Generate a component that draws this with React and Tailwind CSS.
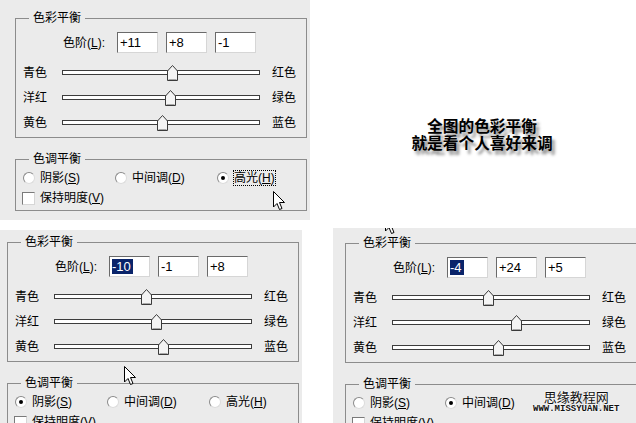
import React from "react";

const FONT = { fontFamily: '"Liberation Sans", "Noto Sans CJK SC", sans-serif' };

function Thumb({ x }) {
  return (
    <svg
      className="absolute top-[-6px]"
      style={{ left: x - 5.5 }}
      width="12"
      height="17"
      viewBox="0 0 12 17"
    >
      <polygon
        points="0.5,6 5.5,0.5 10.5,6 10.5,15.5 0.5,15.5"
        fill="#f4f4f4"
        stroke="#3a3a3a"
        strokeWidth="1"
      />
      <line x1="1.5" y1="14.5" x2="9.5" y2="14.5" stroke="#a8a8a8" />
    </svg>
  );
}

function SliderRow({ left, right, thumb }) {
  return (
    <div className="flex items-center h-[25px] pl-[7px]">
      <div className="w-[39px]">{left}</div>
      <div className="relative w-[198px] h-[5px] border border-[#3c3c3c] bg-white">
        <Thumb x={thumb} />
      </div>
      <div className="ml-[12px]">{right}</div>
    </div>
  );
}

function Field({ value, highlight }) {
  return (
    <div
      className="w-[41px] h-[21px] bg-white border border-t-[#6a6a6a] border-l-[#6a6a6a] border-r-[#d6d6d6] border-b-[#d6d6d6] flex items-center pl-[2px] text-[13px]"
      style={{ fontFamily: '"Liberation Sans", sans-serif' }}
    >
      {highlight ? (
        <span className="bg-[#0a246a] text-white leading-[15px] pr-[2px]">{value}</span>
      ) : (
        <span className="leading-[15px]">{value}</span>
      )}
    </div>
  );
}

function Radio({ on }) {
  return (
    <div className="w-[12px] h-[12px] rounded-full border border-t-[#8a8a8a] border-l-[#8a8a8a] border-r-[#dcdcdc] border-b-[#dcdcdc] bg-white flex items-center justify-center">
      {on && <div className="w-[4px] h-[4px] rounded-full bg-black" />}
    </div>
  );
}

function Cursor({ x, y }) {
  return (
    <svg className="absolute" style={{ left: x, top: y }} width="13" height="21" viewBox="0 0 13 21">
      <path
        d="M0.5 0.5 L0.5 16 L4 12.5 L6.5 18.5 L9 17.5 L6.5 11.5 L11.5 11.5 Z"
        fill="white"
        stroke="black"
        strokeWidth="1"
        strokeLinejoin="miter"
      />
    </svg>
  );
}

function Dialog({ values, thumbs, selected, focus, highlight, cursor, watermark }) {
  const radios = [
    { label: "阴影", key: "S", w: "w-[92px]" },
    { label: "中间调", key: "D", w: "w-[102px]" },
    { label: "高光", key: "H", w: "" },
  ];
  return (
    <div className="relative w-[312px] h-[225px] bg-[#ebebeb] pt-[18px] pl-[15px] text-[12px] text-black" style={FONT}>
      <div className="relative w-[292px] h-[120px] border border-[#8c8c8c]">
        <span className="absolute left-[13px] top-[-9px] px-[4px] bg-[#ebebeb] leading-[16px]">色彩平衡</span>
        <div className="flex items-center mt-[13px] h-[21px]">
          <div className="ml-[47px] w-[54px]">
            色阶(<span className="underline">L</span>):
          </div>
          <div className="flex gap-[8px]">
            {values.map((v, i) => (
              <Field key={i} value={v} highlight={highlight && i === 0} />
            ))}
          </div>
        </div>
        <div className="mt-[7px]">
          <SliderRow left="青色" right="红色" thumb={thumbs[0]} />
          <SliderRow left="洋红" right="绿色" thumb={thumbs[1]} />
          <SliderRow left="黄色" right="蓝色" thumb={thumbs[2]} />
        </div>
      </div>
      <div className="relative mt-[21px] w-[292px] h-[52px] border border-[#8c8c8c]">
        <span className="absolute left-[13px] top-[-9px] px-[4px] bg-[#ebebeb] leading-[16px]">色调平衡</span>
        <div className="flex items-center h-[16px] mt-[10px] pl-[7px]">
          {radios.map((r, i) => (
            <div key={i} className={`flex items-center ${r.w}`}>
              <Radio on={selected === i} />
              <span
                className={`ml-[5px] leading-[14px] ${
                  focus === i ? "outline outline-1 outline-dotted outline-black outline-offset-[0px]" : ""
                }`}
              >
                {r.label}(<span className="underline">{r.key}</span>)
              </span>
            </div>
          ))}
        </div>
        <div className="flex items-center h-[16px] mt-[4px] pl-[6px]">
          <div className="w-[13px] h-[13px] bg-white border border-t-[#7a7a7a] border-l-[#7a7a7a] border-r-[#d6d6d6] border-b-[#d6d6d6]" />
          <span className="ml-[5px]">
            保持明度(<span className="underline">V</span>)
          </span>
        </div>
      </div>
      {watermark && (
        <div className="absolute left-[200px] top-[164px] px-[3px] flex flex-col items-center bg-[#ebebeb]/85">
          <span
            className="text-[13px] leading-[16px] text-[#111]"
            style={{ fontFamily: '"Noto Sans CJK SC", sans-serif', textShadow: "0 0 2px #fff, 0 0 2px #fff" }}
          >
            思缘教程网
          </span>
          <span
            className="text-[9px] font-bold leading-[9px] text-[#111] tracking-[0px]"
            style={{ fontFamily: '"Liberation Mono", monospace', textShadow: "0 0 2px #fff, 0 0 2px #fff" }}
          >
            WWW.MISSYUAN.NET
          </span>
        </div>
      )}
      {cursor && <Cursor x={cursor[0]} y={cursor[1]} />}
    </div>
  );
}

export default function App() {
  return (
    <div className="w-[636px] h-[423px] bg-white overflow-hidden">
      <div className="flex h-[228px]">
        <div className="w-[310px] h-[220px] overflow-hidden">
          <Dialog
            values={["+11", "+8", "-1"]}
            thumbs={[109.5, 107, 99]}
            selected={2}
            focus={2}
            cursor={[273, 191]}
          />
        </div>
        <div className="w-[326px] pt-[117px] pl-[18px] flex flex-col items-center">
          <div
            className="text-[15.7px] font-bold leading-[17px] text-black text-center [text-shadow:3px_4px_3px_rgba(0,0,0,0.45)]"
            style={{ fontFamily: '"Noto Sans CJK SC", sans-serif' }}
          >
            <div>全图的色彩平衡</div>
            <div>就是看个人喜好来调</div>
          </div>
        </div>
      </div>
      <div className="flex">
        <div className="w-[302px] h-[193px] mt-[2px] overflow-hidden">
          <div className="-ml-[8px] -mt-[6px]">
            <Dialog
              values={["-10", "-1", "+8"]}
              thumbs={[91, 101, 108.5]}
              selected={0}
              highlight
              cursor={[132, 142]}
            />
          </div>
        </div>
        <div className="ml-[31px] w-[303px] h-[195px] overflow-hidden">
          <div className="-ml-[3px] -mt-[3px]">
            <Dialog
              values={["-4", "+24", "+5"]}
              thumbs={[95.5, 123.5, 105]}
              selected={1}
              highlight
              cursor={[55, -10]}
              watermark
            />
          </div>
        </div>
      </div>
    </div>
  );
}
